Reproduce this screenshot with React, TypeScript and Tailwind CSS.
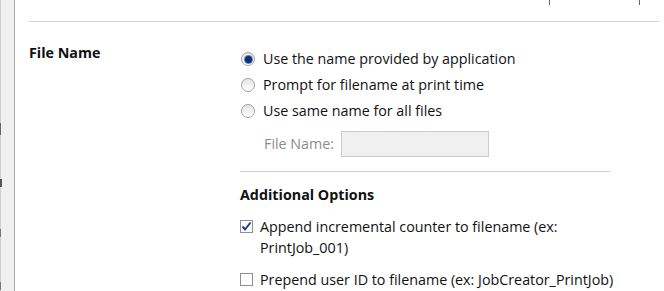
import React, { type FC } from "react";

const Radio: FC<{ checked?: boolean }> = ({ checked }) => (
  <span className="flex h-[14px] w-[14px] shrink-0 items-center justify-center rounded-full border border-[#a3a3a3] bg-gradient-to-b from-[#e4e4e4] to-white">
    {checked && <span className="h-[7px] w-[7px] rounded-full bg-[#0d2f7a] ring-1 ring-[#6a84b8]" />}
  </span>
);

const Checkbox: FC<{ checked?: boolean }> = ({ checked }) => (
  <span className="flex h-[13px] w-[13px] shrink-0 items-center justify-center border border-[#8f8f8f] bg-white">
    {checked && (
      <svg width="11" height="11" viewBox="0 0 11 11">
        <path d="M1.5 5.5 L4 8.5 L9.5 1.5" fill="none" stroke="#1b3f94" strokeWidth="2" />
      </svg>
    )}
  </span>
);

const RadioRow: FC<{ checked?: boolean; label: string }> = ({ checked, label }) => (
  <div className="flex h-[26px] items-center">
    <span className="ml-[1px]">
      <Radio checked={checked} />
    </span>
    <span className="ml-[8px]">{label}</span>
  </div>
);

export default function App() {
  return (
    <div
      className="flex h-[291px] w-[664px] overflow-hidden bg-white text-[14.3px] text-[#111]"
      style={{ fontFamily: '"Segoe UI", "Open Sans", sans-serif' }}
    >
      <div className="flex w-[15px] shrink-0 flex-col border-l border-r border-l-[#cfcfcf] border-r-[#a6a6a6] bg-[#f0f0f0]">
        <span className="-ml-[1px] mt-[123px] h-[12px] w-[1px] bg-[#666]" />
        <span className="-ml-[1px] mt-[44px] h-[8px] w-[2px] bg-[#555]" />
        <span className="-ml-[1px] mt-[42px] h-[8px] w-[1px] bg-[#777]" />
        <span className="-ml-[1px] mt-[45px] h-[8px] w-[1px] bg-[#777]" />
      </div>

      <div className="flex-1 pl-[14px] pr-[5px]">
        <div className="flex h-[21px]">
          <span className="ml-[520px] h-[5px] w-[1px] bg-[#666]" />
          <span className="ml-[89px] h-[5px] w-[1px] bg-[#666]" />
        </div>
        <div className="border-t border-[#d6d6d6]" />

        <div className="flex">
          <div className="w-[211px] pt-[21px] leading-[20px] font-bold">File Name</div>

          <div className="flex-1 pt-[24px]">
            <RadioRow checked label="Use the name provided by application" />
            <RadioRow label="Prompt for filename at print time" />
            <RadioRow label="Use same name for all files" />

            <div className="mt-[7px] flex h-[26px] items-center">
              <span className="ml-[24px] w-[77px] text-[#8c8c8c]">File Name:</span>
              <span className="h-[26px] w-[148px] border border-[#cccccc] bg-[#f0f0f0]" />
            </div>

            <div className="mt-[14px] w-[370px] border-t border-[#cfcfcf]" />

            <div className="mt-[13px] leading-[20px] font-bold">Additional Options</div>

            <div className="mt-[11px] flex leading-[21px]">
              <span className="mt-[4px]">
                <Checkbox checked />
              </span>
              <span className="ml-[7px]">
                Append incremental counter to filename (ex:
                <br />
                PrintJob_001)
              </span>
            </div>

            <div className="mt-[11px] flex leading-[21px]">
              <span className="mt-[4px]">
                <Checkbox />
              </span>
              <span className="ml-[7px]">Prepend user ID to filename (ex: JobCreator_PrintJob)</span>
            </div>
          </div>
        </div>
      </div>
    </div>
  );
}
